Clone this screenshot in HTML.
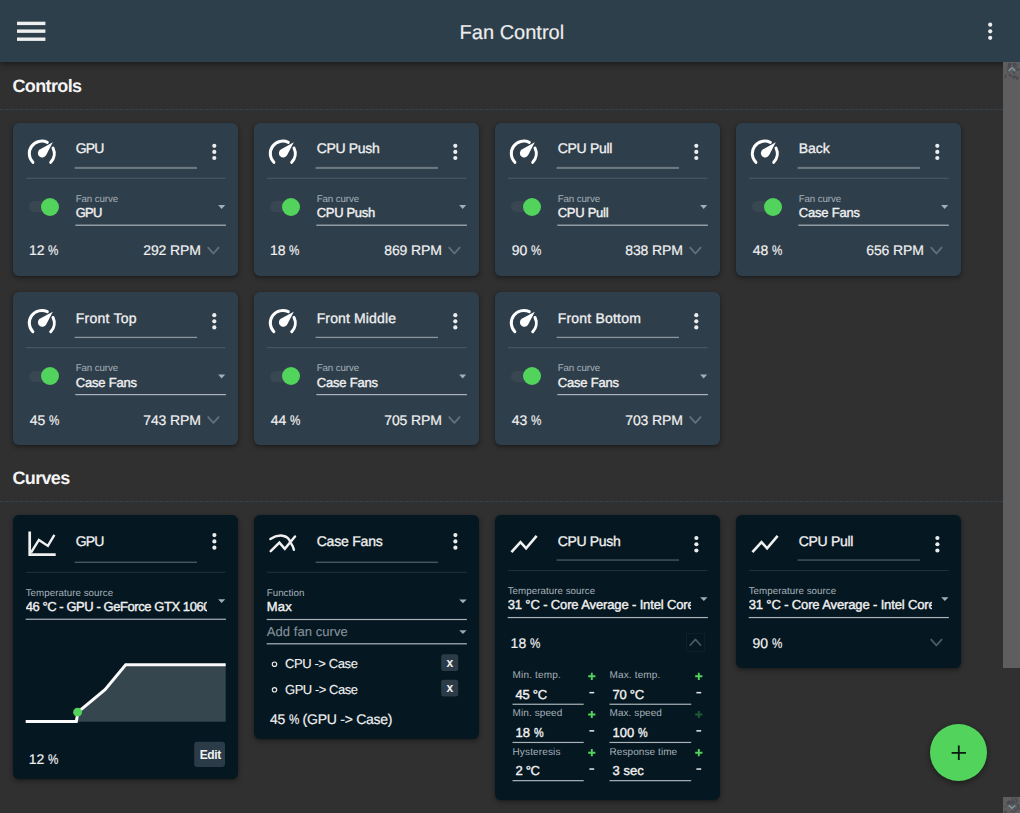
<!DOCTYPE html>
<html lang="en"><head><meta charset="utf-8"><title>Fan Control</title>
<style>
html,body{margin:0;padding:0}
body{width:1020px;height:813px;overflow:hidden;position:relative;background:#303030;font-family:"Liberation Sans",Arial,sans-serif;}
svg.g{position:absolute;left:0;top:0;overflow:visible}
.t,.c{position:absolute;white-space:pre;line-height:1;margin:0;padding:0;border:0;background:none;font-family:inherit;font-weight:400;text-align:left}
.c{overflow:hidden}
body{text-rendering:geometricPrecision}
.p{display:inline-block;width:.735em;transform:scaleX(.83);transform-origin:0 50%;letter-spacing:0}
</style></head><body>
<header>
<div style="position:absolute;left:0.00px;top:0.00px;width:1020.00px;height:62.00px;background:#2e3f4c;box-shadow:0 2px 4px -1px rgba(0,0,0,.22),0 4px 5px 0 rgba(0,0,0,.15),0 1px 8px 0 rgba(0,0,0,.13);z-index:5;"></div>
<svg style="position:absolute;left:0;top:0;overflow:visible;z-index:6" width="1" height="1"><rect x="17" y="21.7" width="28.4" height="3.4" fill="#efefef"/><rect x="17" y="29.45" width="28.4" height="3.4" fill="#efefef"/><rect x="17" y="37.5" width="28.4" height="3.4" fill="#efefef"/></svg>
<svg style="position:absolute;left:0;top:0;overflow:visible;z-index:6" width="1" height="1"><circle cx="990.2" cy="24.7" r="2.1" fill="#ececec"/><circle cx="990.2" cy="31.3" r="2.1" fill="#ececec"/><circle cx="990.2" cy="37.8" r="2.1" fill="#ececec"/></svg>
<h1 id="t0" class="t" style="top:22.67px;font-size:20px;color:#ededed;letter-spacing:0.009px;-webkit-text-stroke:0.18px;left:459.60px;z-index:6;"><span>Fan Control</span></h1>
</header>
<div class="scrollbar" aria-hidden="true">
<div style="position:absolute;left:1003.00px;top:62.00px;width:17.00px;height:605.70px;background:#5e5e5e;z-index:7;"></div>
<div style="position:absolute;left:1003.00px;top:797.00px;width:17.00px;height:16.00px;background:#5e5e5e;z-index:7;"></div>
<svg style="position:absolute;left:0;top:0;overflow:visible;z-index:8" width="1" height="1"><rect x="1007.3" y="70.7" width="1.8" height="2.0" fill="#4a4a54"/><rect x="1012.8" y="63.5" width="1.0" height="2.3" fill="#4a4a54"/><rect x="1007.6" y="66.0" width="3.2" height="1.8" fill="#4a4a54"/><rect x="1015.7" y="69.6" width="2.4" height="1.2" fill="#4a4a54"/><rect x="1012.9" y="75.5" width="2.2" height="2.2" fill="#4a4a54"/><rect x="1013.4" y="63.5" width="2.7" height="1.9" fill="#4a4a54"/><rect x="1008.2" y="63.0" width="2.9" height="1.8" fill="#4a4a54"/><rect x="1014.1" y="75.7" width="2.6" height="2.5" fill="#4a4a54"/><rect x="1009.5" y="74.5" width="2.0" height="2.5" fill="#4a4a54"/><rect x="1016.3" y="64.0" width="1.3" height="1.3" fill="#4a4a54"/><rect x="1017.5" y="69.0" width="2.4" height="1.5" fill="#4a4a54"/><rect x="1011.1" y="68.3" width="1.8" height="1.9" fill="#4a4a54"/><rect x="1012.2" y="76.1" width="2.5" height="2.5" fill="#4a4a54"/><rect x="1016.0" y="77.4" width="2.5" height="1.3" fill="#4a4a54"/><rect x="1016.0" y="77.0" width="3.0" height="1.9" fill="#4a4a54"/><rect x="1014.0" y="65.7" width="2.8" height="1.9" fill="#4a4a54"/><rect x="1008.0" y="63.5" width="2.9" height="2.6" fill="#4a4a54"/><rect x="1005.2" y="74.5" width="1.9" height="1.2" fill="#4a4a54"/><rect x="1008.1" y="74.0" width="2.9" height="1.1" fill="#4a4a54"/><rect x="1012.6" y="63.2" width="2.6" height="1.5" fill="#4a4a54"/><rect x="1016.3" y="77.2" width="2.1" height="2.6" fill="#4a4a54"/><rect x="1008.3" y="63.7" width="2.3" height="1.1" fill="#4a4a54"/><rect x="1006.8" y="68.6" width="2.3" height="1.2" fill="#4a4a54"/><rect x="1004.6" y="75.5" width="1.7" height="2.5" fill="#4a4a54"/><rect x="1016.6" y="68.2" width="2.0" height="1.8" fill="#4a4a54"/><rect x="1013.0" y="71.4" width="2.2" height="2.0" fill="#4a4a54"/><rect x="1017.2" y="804.6" width="1.9" height="2.2" fill="#4a4a54"/><rect x="1007.3" y="801.7" width="3.2" height="1.8" fill="#4a4a54"/><rect x="1011.7" y="797.7" width="1.9" height="1.9" fill="#4a4a54"/><rect x="1004.3" y="806.1" width="2.4" height="1.1" fill="#4a4a54"/><rect x="1012.8" y="804.0" width="2.5" height="1.6" fill="#4a4a54"/><rect x="1013.9" y="807.8" width="1.0" height="1.1" fill="#4a4a54"/><rect x="1013.5" y="811.0" width="1.6" height="1.7" fill="#4a4a54"/><rect x="1012.3" y="802.0" width="1.8" height="1.5" fill="#4a4a54"/><rect x="1009.2" y="805.8" width="1.7" height="1.6" fill="#4a4a54"/><rect x="1014.8" y="797.9" width="2.3" height="2.2" fill="#4a4a54"/><rect x="1008.3" y="800.6" width="2.8" height="1.4" fill="#4a4a54"/><rect x="1006.6" y="803.6" width="2.5" height="1.2" fill="#4a4a54"/><rect x="1008.5" y="802.2" width="2.8" height="1.7" fill="#4a4a54"/><rect x="1016.0" y="799.9" width="1.7" height="2.0" fill="#4a4a54"/><rect x="1016.4" y="803.8" width="1.5" height="1.2" fill="#4a4a54"/><rect x="1011.4" y="800.2" width="2.8" height="2.3" fill="#4a4a54"/><rect x="1006.6" y="801.4" width="2.8" height="2.0" fill="#4a4a54"/><rect x="1015.3" y="802.3" width="1.3" height="1.5" fill="#4a4a54"/><rect x="1015.1" y="801.3" width="1.8" height="1.7" fill="#4a4a54"/><rect x="1009.9" y="803.2" width="3.0" height="1.2" fill="#4a4a54"/><rect x="1004.1" y="810.7" width="2.9" height="2.6" fill="#4a4a54"/><rect x="1010.1" y="810.8" width="3.0" height="1.4" fill="#4a4a54"/><rect x="1014.4" y="809.2" width="2.5" height="1.8" fill="#4a4a54"/><rect x="1008.0" y="802.3" width="1.5" height="1.1" fill="#4a4a54"/><rect x="1012.2" y="801.5" width="2.8" height="1.1" fill="#4a4a54"/><rect x="1016.7" y="807.2" width="3.0" height="2.4" fill="#4a4a54"/><path d="M1008.6 70.9L1011.9 67.9L1015.2 70.9" fill="none" stroke="#7f9a9e" stroke-width="1.3"/><path d="M1008.6 805.3L1011.9 808.3L1015.2 805.3" fill="none" stroke="#7f9a9e" stroke-width="1.3"/></svg>
</div>
<main>
<section class="controls">
<div style="position:absolute;left:0;top:109px;width:1003px;height:1px;background:rgba(56,84,120,0.16);"></div>
<div style="position:absolute;left:0;top:109px;width:1003px;height:0;border-top:1px dashed rgba(70,98,140,0.26);"></div>
<h2 id="t1" class="t" style="top:76.96px;font-size:18px;color:#f4f4f4;font-weight:700;letter-spacing:-0.625px;left:12.50px;"><span>Controls</span></h2>
<article class="control-card">
<div style="position:absolute;left:13.20px;top:122.50px;width:225.00px;height:153.00px;background:#2e3e4b;border-radius:6px;box-shadow:0 2px 5px 1px rgba(0,0,0,.24),0 1px 2px rgba(0,0,0,.2);"></div>
<svg class="g" width="1" height="1"><path d="M32.88 162.31A12.5 12.5 0 0 1 47.28 142.32" fill="none" stroke="#fff" stroke-width="3.0" stroke-linecap="round"/><path d="M53.03 148.07A12.5 12.5 0 0 1 50.72 162.31" fill="none" stroke="#fff" stroke-width="3.0" stroke-linecap="round"/><path d="M52.80 142.35L46.21 155.07A4.4 4.4 0 1 1 40.20 149.18Z" fill="#fff"/><rect x="74.60" y="166.85" width="122.40" height="2.10" fill="#6d7981"/><rect x="26.00" y="177.70" width="199.50" height="1.10" fill="#4b5a65"/><circle cx="214.30" cy="145.80" r="2.1" fill="#ececec"/><circle cx="214.30" cy="151.90" r="2.1" fill="#ececec"/><circle cx="214.30" cy="158.00" r="2.1" fill="#ececec"/></svg>
<div style="position:absolute;left:29.10px;top:201.30px;width:28.00px;height:11.00px;background:#384751;border-radius:6px;"></div>
<div style="position:absolute;left:41.20px;top:197.80px;width:18.00px;height:18.00px;background:#51d35c;border-radius:50%;"></div>
<svg class="g" width="1" height="1"><rect x="75.30" y="224.60" width="150.60" height="1.20" fill="#aab2b8"/><path d="M218.10 205.10H225.20L221.65 209.10Z" fill="#a4aeb5"/><path d="M208.20 247.70L213.40 253.50L218.60 247.70" fill="none" stroke="#62707b" stroke-width="1.85" stroke-linecap="round" stroke-linejoin="round"/></svg>
<h3 id="t2" class="t" style="top:141.25px;font-size:14px;color:#f1f1f1;letter-spacing:-0.856px;-webkit-text-stroke:0.3px;left:75.70px;"><span>GPU</span></h3>
<label id="t3" class="t" style="top:194.75px;font-size:9.75px;color:#a6b1b9;letter-spacing:-0.118px;left:75.70px;"><span>Fan curve</span></label>
<div id="t4" class="t" style="top:206.40px;font-size:13px;color:#f1f1f1;letter-spacing:-0.793px;-webkit-text-stroke:0.38px;left:75.70px;"><span>GPU</span></div>
<div id="t5" class="t" style="top:243.45px;font-size:14px;color:#f1f1f1;letter-spacing:0.011px;-webkit-text-stroke:0.18px;left:28.90px;"><span>12 <span class="p">%</span></span></div>
<div id="t6" class="t" style="top:243.45px;font-size:14px;color:#f1f1f1;letter-spacing:-0.136px;-webkit-text-stroke:0.18px;right:819.34px;"><span>292 RPM</span></div>
</article>
<article class="control-card">
<div style="position:absolute;left:254.20px;top:122.50px;width:225.00px;height:153.00px;background:#2e3e4b;border-radius:6px;box-shadow:0 2px 5px 1px rgba(0,0,0,.24),0 1px 2px rgba(0,0,0,.2);"></div>
<svg class="g" width="1" height="1"><path d="M273.88 162.31A12.5 12.5 0 0 1 288.28 142.32" fill="none" stroke="#fff" stroke-width="3.0" stroke-linecap="round"/><path d="M294.03 148.07A12.5 12.5 0 0 1 291.72 162.31" fill="none" stroke="#fff" stroke-width="3.0" stroke-linecap="round"/><path d="M293.80 142.35L287.21 155.07A4.4 4.4 0 1 1 281.20 149.18Z" fill="#fff"/><rect x="315.60" y="166.85" width="122.40" height="2.10" fill="#6d7981"/><rect x="267.00" y="177.70" width="199.50" height="1.10" fill="#4b5a65"/><circle cx="455.30" cy="145.80" r="2.1" fill="#ececec"/><circle cx="455.30" cy="151.90" r="2.1" fill="#ececec"/><circle cx="455.30" cy="158.00" r="2.1" fill="#ececec"/></svg>
<div style="position:absolute;left:270.10px;top:201.30px;width:28.00px;height:11.00px;background:#384751;border-radius:6px;"></div>
<div style="position:absolute;left:282.20px;top:197.80px;width:18.00px;height:18.00px;background:#51d35c;border-radius:50%;"></div>
<svg class="g" width="1" height="1"><rect x="316.30" y="224.60" width="150.60" height="1.20" fill="#aab2b8"/><path d="M459.10 205.10H466.20L462.65 209.10Z" fill="#a4aeb5"/><path d="M449.20 247.70L454.40 253.50L459.60 247.70" fill="none" stroke="#62707b" stroke-width="1.85" stroke-linecap="round" stroke-linejoin="round"/></svg>
<h3 id="t7" class="t" style="top:141.25px;font-size:14px;color:#f1f1f1;letter-spacing:-0.331px;-webkit-text-stroke:0.3px;left:316.70px;"><span>CPU Push</span></h3>
<label id="t8" class="t" style="top:194.75px;font-size:9.75px;color:#a6b1b9;letter-spacing:-0.118px;left:316.70px;"><span>Fan curve</span></label>
<div id="t9" class="t" style="top:206.40px;font-size:13px;color:#f1f1f1;letter-spacing:-0.309px;-webkit-text-stroke:0.38px;left:316.70px;"><span>CPU Push</span></div>
<div id="t10" class="t" style="top:243.45px;font-size:14px;color:#f1f1f1;letter-spacing:0.011px;-webkit-text-stroke:0.18px;left:269.90px;"><span>18 <span class="p">%</span></span></div>
<div id="t11" class="t" style="top:243.45px;font-size:14px;color:#f1f1f1;letter-spacing:-0.136px;-webkit-text-stroke:0.18px;right:578.34px;"><span>869 RPM</span></div>
</article>
<article class="control-card">
<div style="position:absolute;left:495.20px;top:122.50px;width:225.00px;height:153.00px;background:#2e3e4b;border-radius:6px;box-shadow:0 2px 5px 1px rgba(0,0,0,.24),0 1px 2px rgba(0,0,0,.2);"></div>
<svg class="g" width="1" height="1"><path d="M514.88 162.31A12.5 12.5 0 0 1 529.28 142.32" fill="none" stroke="#fff" stroke-width="3.0" stroke-linecap="round"/><path d="M535.03 148.07A12.5 12.5 0 0 1 532.72 162.31" fill="none" stroke="#fff" stroke-width="3.0" stroke-linecap="round"/><path d="M534.80 142.35L528.21 155.07A4.4 4.4 0 1 1 522.20 149.18Z" fill="#fff"/><rect x="556.60" y="166.85" width="122.40" height="2.10" fill="#6d7981"/><rect x="508.00" y="177.70" width="199.50" height="1.10" fill="#4b5a65"/><circle cx="696.30" cy="145.80" r="2.1" fill="#ececec"/><circle cx="696.30" cy="151.90" r="2.1" fill="#ececec"/><circle cx="696.30" cy="158.00" r="2.1" fill="#ececec"/></svg>
<div style="position:absolute;left:511.10px;top:201.30px;width:28.00px;height:11.00px;background:#384751;border-radius:6px;"></div>
<div style="position:absolute;left:523.20px;top:197.80px;width:18.00px;height:18.00px;background:#51d35c;border-radius:50%;"></div>
<svg class="g" width="1" height="1"><rect x="557.30" y="224.60" width="150.60" height="1.20" fill="#aab2b8"/><path d="M700.10 205.10H707.20L703.65 209.10Z" fill="#a4aeb5"/><path d="M690.20 247.70L695.40 253.50L700.60 247.70" fill="none" stroke="#62707b" stroke-width="1.85" stroke-linecap="round" stroke-linejoin="round"/></svg>
<h3 id="t12" class="t" style="top:141.25px;font-size:14px;color:#f1f1f1;letter-spacing:-0.290px;-webkit-text-stroke:0.3px;left:557.70px;"><span>CPU Pull</span></h3>
<label id="t13" class="t" style="top:194.75px;font-size:9.75px;color:#a6b1b9;letter-spacing:-0.118px;left:557.70px;"><span>Fan curve</span></label>
<div id="t14" class="t" style="top:206.40px;font-size:13px;color:#f1f1f1;letter-spacing:-0.270px;-webkit-text-stroke:0.38px;left:557.70px;"><span>CPU Pull</span></div>
<div id="t15" class="t" style="top:243.45px;font-size:14px;color:#f1f1f1;letter-spacing:0.011px;-webkit-text-stroke:0.18px;left:511.70px;"><span>90 <span class="p">%</span></span></div>
<div id="t16" class="t" style="top:243.45px;font-size:14px;color:#f1f1f1;letter-spacing:-0.136px;-webkit-text-stroke:0.18px;right:337.34px;"><span>838 RPM</span></div>
</article>
<article class="control-card">
<div style="position:absolute;left:736.20px;top:122.50px;width:225.00px;height:153.00px;background:#2e3e4b;border-radius:6px;box-shadow:0 2px 5px 1px rgba(0,0,0,.24),0 1px 2px rgba(0,0,0,.2);"></div>
<svg class="g" width="1" height="1"><path d="M755.88 162.31A12.5 12.5 0 0 1 770.28 142.32" fill="none" stroke="#fff" stroke-width="3.0" stroke-linecap="round"/><path d="M776.03 148.07A12.5 12.5 0 0 1 773.72 162.31" fill="none" stroke="#fff" stroke-width="3.0" stroke-linecap="round"/><path d="M775.80 142.35L769.21 155.07A4.4 4.4 0 1 1 763.20 149.18Z" fill="#fff"/><rect x="797.60" y="166.85" width="122.40" height="2.10" fill="#6d7981"/><rect x="749.00" y="177.70" width="199.50" height="1.10" fill="#4b5a65"/><circle cx="937.30" cy="145.80" r="2.1" fill="#ececec"/><circle cx="937.30" cy="151.90" r="2.1" fill="#ececec"/><circle cx="937.30" cy="158.00" r="2.1" fill="#ececec"/></svg>
<div style="position:absolute;left:752.10px;top:201.30px;width:28.00px;height:11.00px;background:#384751;border-radius:6px;"></div>
<div style="position:absolute;left:764.20px;top:197.80px;width:18.00px;height:18.00px;background:#51d35c;border-radius:50%;"></div>
<svg class="g" width="1" height="1"><rect x="798.30" y="224.60" width="150.60" height="1.20" fill="#aab2b8"/><path d="M941.10 205.10H948.20L944.65 209.10Z" fill="#a4aeb5"/><path d="M931.20 247.70L936.40 253.50L941.60 247.70" fill="none" stroke="#62707b" stroke-width="1.85" stroke-linecap="round" stroke-linejoin="round"/></svg>
<h3 id="t17" class="t" style="top:141.25px;font-size:14px;color:#f1f1f1;-webkit-text-stroke:0.3px;left:798.70px;"><span>Back</span></h3>
<label id="t18" class="t" style="top:194.75px;font-size:9.75px;color:#a6b1b9;letter-spacing:-0.118px;left:798.70px;"><span>Fan curve</span></label>
<div id="t19" class="t" style="top:206.40px;font-size:13px;color:#f1f1f1;letter-spacing:-0.186px;-webkit-text-stroke:0.38px;left:798.70px;"><span>Case Fans</span></div>
<div id="t20" class="t" style="top:243.45px;font-size:14px;color:#f1f1f1;letter-spacing:0.011px;-webkit-text-stroke:0.18px;left:752.70px;"><span>48 <span class="p">%</span></span></div>
<div id="t21" class="t" style="top:243.45px;font-size:14px;color:#f1f1f1;letter-spacing:-0.136px;-webkit-text-stroke:0.18px;right:96.34px;"><span>656 RPM</span></div>
</article>
<article class="control-card">
<div style="position:absolute;left:13.20px;top:291.90px;width:225.00px;height:153.00px;background:#2e3e4b;border-radius:6px;box-shadow:0 2px 5px 1px rgba(0,0,0,.24),0 1px 2px rgba(0,0,0,.2);"></div>
<svg class="g" width="1" height="1"><path d="M32.88 331.71A12.5 12.5 0 0 1 47.28 311.72" fill="none" stroke="#fff" stroke-width="3.0" stroke-linecap="round"/><path d="M53.03 317.47A12.5 12.5 0 0 1 50.72 331.71" fill="none" stroke="#fff" stroke-width="3.0" stroke-linecap="round"/><path d="M52.80 311.75L46.21 324.47A4.4 4.4 0 1 1 40.20 318.58Z" fill="#fff"/><rect x="74.60" y="336.75" width="122.40" height="1.30" fill="#8a959c"/><rect x="26.00" y="347.10" width="199.50" height="1.10" fill="#4b5a65"/><circle cx="214.30" cy="315.20" r="2.1" fill="#ececec"/><circle cx="214.30" cy="321.30" r="2.1" fill="#ececec"/><circle cx="214.30" cy="327.40" r="2.1" fill="#ececec"/></svg>
<div style="position:absolute;left:29.10px;top:370.70px;width:28.00px;height:11.00px;background:#384751;border-radius:6px;"></div>
<div style="position:absolute;left:41.20px;top:367.20px;width:18.00px;height:18.00px;background:#51d35c;border-radius:50%;"></div>
<svg class="g" width="1" height="1"><rect x="75.30" y="394.00" width="150.60" height="1.20" fill="#aab2b8"/><path d="M218.10 374.50H225.20L221.65 378.50Z" fill="#a4aeb5"/><path d="M208.20 417.10L213.40 422.90L218.60 417.10" fill="none" stroke="#62707b" stroke-width="1.85" stroke-linecap="round" stroke-linejoin="round"/></svg>
<h3 id="t22" class="t" style="top:310.65px;font-size:14px;color:#f1f1f1;letter-spacing:0.250px;-webkit-text-stroke:0.3px;left:75.70px;"><span>Front Top</span></h3>
<label id="t23" class="t" style="top:364.15px;font-size:9.75px;color:#a6b1b9;letter-spacing:-0.118px;left:75.70px;"><span>Fan curve</span></label>
<div id="t24" class="t" style="top:375.80px;font-size:13px;color:#f1f1f1;letter-spacing:-0.186px;-webkit-text-stroke:0.38px;left:75.70px;"><span>Case Fans</span></div>
<div id="t25" class="t" style="top:412.85px;font-size:14px;color:#f1f1f1;letter-spacing:0.011px;-webkit-text-stroke:0.18px;left:29.70px;"><span>45 <span class="p">%</span></span></div>
<div id="t26" class="t" style="top:412.85px;font-size:14px;color:#f1f1f1;letter-spacing:-0.136px;-webkit-text-stroke:0.18px;right:819.34px;"><span>743 RPM</span></div>
</article>
<article class="control-card">
<div style="position:absolute;left:254.20px;top:291.90px;width:225.00px;height:153.00px;background:#2e3e4b;border-radius:6px;box-shadow:0 2px 5px 1px rgba(0,0,0,.24),0 1px 2px rgba(0,0,0,.2);"></div>
<svg class="g" width="1" height="1"><path d="M273.88 331.71A12.5 12.5 0 0 1 288.28 311.72" fill="none" stroke="#fff" stroke-width="3.0" stroke-linecap="round"/><path d="M294.03 317.47A12.5 12.5 0 0 1 291.72 331.71" fill="none" stroke="#fff" stroke-width="3.0" stroke-linecap="round"/><path d="M293.80 311.75L287.21 324.47A4.4 4.4 0 1 1 281.20 318.58Z" fill="#fff"/><rect x="315.60" y="336.75" width="122.40" height="1.30" fill="#8a959c"/><rect x="267.00" y="347.10" width="199.50" height="1.10" fill="#4b5a65"/><circle cx="455.30" cy="315.20" r="2.1" fill="#ececec"/><circle cx="455.30" cy="321.30" r="2.1" fill="#ececec"/><circle cx="455.30" cy="327.40" r="2.1" fill="#ececec"/></svg>
<div style="position:absolute;left:270.10px;top:370.70px;width:28.00px;height:11.00px;background:#384751;border-radius:6px;"></div>
<div style="position:absolute;left:282.20px;top:367.20px;width:18.00px;height:18.00px;background:#51d35c;border-radius:50%;"></div>
<svg class="g" width="1" height="1"><rect x="316.30" y="394.00" width="150.60" height="1.20" fill="#aab2b8"/><path d="M459.10 374.50H466.20L462.65 378.50Z" fill="#a4aeb5"/><path d="M449.20 417.10L454.40 422.90L459.60 417.10" fill="none" stroke="#62707b" stroke-width="1.85" stroke-linecap="round" stroke-linejoin="round"/></svg>
<h3 id="t27" class="t" style="top:310.65px;font-size:14px;color:#f1f1f1;letter-spacing:0.132px;-webkit-text-stroke:0.3px;left:316.70px;"><span>Front Middle</span></h3>
<label id="t28" class="t" style="top:364.15px;font-size:9.75px;color:#a6b1b9;letter-spacing:-0.118px;left:316.70px;"><span>Fan curve</span></label>
<div id="t29" class="t" style="top:375.80px;font-size:13px;color:#f1f1f1;letter-spacing:-0.186px;-webkit-text-stroke:0.38px;left:316.70px;"><span>Case Fans</span></div>
<div id="t30" class="t" style="top:412.85px;font-size:14px;color:#f1f1f1;letter-spacing:0.011px;-webkit-text-stroke:0.18px;left:270.70px;"><span>44 <span class="p">%</span></span></div>
<div id="t31" class="t" style="top:412.85px;font-size:14px;color:#f1f1f1;letter-spacing:-0.136px;-webkit-text-stroke:0.18px;right:578.34px;"><span>705 RPM</span></div>
</article>
<article class="control-card">
<div style="position:absolute;left:495.20px;top:291.90px;width:225.00px;height:153.00px;background:#2e3e4b;border-radius:6px;box-shadow:0 2px 5px 1px rgba(0,0,0,.24),0 1px 2px rgba(0,0,0,.2);"></div>
<svg class="g" width="1" height="1"><path d="M514.88 331.71A12.5 12.5 0 0 1 529.28 311.72" fill="none" stroke="#fff" stroke-width="3.0" stroke-linecap="round"/><path d="M535.03 317.47A12.5 12.5 0 0 1 532.72 331.71" fill="none" stroke="#fff" stroke-width="3.0" stroke-linecap="round"/><path d="M534.80 311.75L528.21 324.47A4.4 4.4 0 1 1 522.20 318.58Z" fill="#fff"/><rect x="556.60" y="336.75" width="122.40" height="1.30" fill="#8a959c"/><rect x="508.00" y="347.10" width="199.50" height="1.10" fill="#4b5a65"/><circle cx="696.30" cy="315.20" r="2.1" fill="#ececec"/><circle cx="696.30" cy="321.30" r="2.1" fill="#ececec"/><circle cx="696.30" cy="327.40" r="2.1" fill="#ececec"/></svg>
<div style="position:absolute;left:511.10px;top:370.70px;width:28.00px;height:11.00px;background:#384751;border-radius:6px;"></div>
<div style="position:absolute;left:523.20px;top:367.20px;width:18.00px;height:18.00px;background:#51d35c;border-radius:50%;"></div>
<svg class="g" width="1" height="1"><rect x="557.30" y="394.00" width="150.60" height="1.20" fill="#aab2b8"/><path d="M700.10 374.50H707.20L703.65 378.50Z" fill="#a4aeb5"/><path d="M690.20 417.10L695.40 422.90L700.60 417.10" fill="none" stroke="#62707b" stroke-width="1.85" stroke-linecap="round" stroke-linejoin="round"/></svg>
<h3 id="t32" class="t" style="top:310.65px;font-size:14px;color:#f1f1f1;letter-spacing:0.199px;-webkit-text-stroke:0.3px;left:557.70px;"><span>Front Bottom</span></h3>
<label id="t33" class="t" style="top:364.15px;font-size:9.75px;color:#a6b1b9;letter-spacing:-0.118px;left:557.70px;"><span>Fan curve</span></label>
<div id="t34" class="t" style="top:375.80px;font-size:13px;color:#f1f1f1;letter-spacing:-0.186px;-webkit-text-stroke:0.38px;left:557.70px;"><span>Case Fans</span></div>
<div id="t35" class="t" style="top:412.85px;font-size:14px;color:#f1f1f1;letter-spacing:0.011px;-webkit-text-stroke:0.18px;left:511.70px;"><span>43 <span class="p">%</span></span></div>
<div id="t36" class="t" style="top:412.85px;font-size:14px;color:#f1f1f1;letter-spacing:-0.136px;-webkit-text-stroke:0.18px;right:337.34px;"><span>703 RPM</span></div>
</article>
</section>
<section class="curves">
<div style="position:absolute;left:0;top:501px;width:1003px;height:1px;background:rgba(56,84,120,0.16);"></div>
<div style="position:absolute;left:0;top:501px;width:1003px;height:0;border-top:1px dashed rgba(70,98,140,0.26);"></div>
<h2 id="t37" class="t" style="top:469.36px;font-size:18px;color:#f4f4f4;font-weight:700;letter-spacing:-0.672px;left:12.50px;"><span>Curves</span></h2>
<article class="curve-card graph">
<div style="position:absolute;left:13.20px;top:515.00px;width:225.00px;height:264.20px;background:#051721;border-radius:6px;box-shadow:0 2px 5px 1px rgba(0,0,0,.24),0 1px 2px rgba(0,0,0,.2);"></div>
<svg class="g" width="1" height="1"><rect x="74.60" y="561.65" width="122.40" height="1.20" fill="#52616b"/><rect x="26.00" y="571.80" width="199.50" height="1.00" fill="#24343f"/><circle cx="214.40" cy="535.10" r="2.1" fill="#ececec"/><circle cx="214.40" cy="541.40" r="2.1" fill="#ececec"/><circle cx="214.40" cy="547.70" r="2.1" fill="#ececec"/><g fill="none" stroke="#f0f0f0" stroke-width="2.7"><path d="M29.7 531.6V554.7H55.7" stroke-linejoin="miter"/><path d="M31.0 552.6L38.9 539.9L47.9 545.9L54.4 534.8" stroke-width="2.4"/></g><rect x="25.70" y="618.65" width="200.20" height="1.20" fill="#aab2b8"/><path d="M218.10 599.20H225.20L221.65 603.00Z" fill="#a4aeb5"/><path d="M76.3 721.8L78 712L105 689.6L125.7 664.7H225.7V721.8Z" fill="#35464f"/><path d="M25.7 721.4H76.3L78 712L105 689.6L125.7 664.7H225.7" fill="none" stroke="#fbfbfb" stroke-width="3" stroke-linejoin="miter"/><circle cx="77.6" cy="712.2" r="4.4" fill="#51d35c"/><rect x="194.2" y="741.7" width="30.8" height="25.3" rx="3" fill="#2b3b48"/></svg>
<h3 id="t38" class="t" style="top:533.65px;font-size:14px;color:#f1f1f1;letter-spacing:-0.856px;-webkit-text-stroke:0.3px;left:75.70px;"><span>GPU</span></h3>
<label id="t39" class="t" style="top:588.75px;font-size:9.75px;color:#a6b1b9;letter-spacing:0.043px;left:25.70px;"><span>Temperature source</span></label>
<div id="t40" class="c" style="top:600.20px;font-size:13px;color:#f1f1f1;letter-spacing:-0.434px;-webkit-text-stroke:0.38px;left:25.70px;width:181.30px;height:15.6px;"><span>46 °C - GPU - GeForce GTX 1060</span></div>
<div id="t41" class="t" style="top:751.95px;font-size:14px;color:#f1f1f1;letter-spacing:0.011px;-webkit-text-stroke:0.18px;left:28.80px;"><span>12 <span class="p">%</span></span></div>
<button id="t42" class="t" style="top:748.64px;font-size:12px;color:#f1f1f1;font-weight:700;letter-spacing:-0.343px;left:199.70px;"><span>Edit</span></button>
</article>
<article class="curve-card mix">
<div style="position:absolute;left:254.20px;top:515.00px;width:225.00px;height:223.80px;background:#051721;border-radius:6px;box-shadow:0 2px 5px 1px rgba(0,0,0,.24),0 1px 2px rgba(0,0,0,.2);"></div>
<svg class="g" width="1" height="1"><rect x="315.60" y="561.65" width="122.40" height="1.20" fill="#52616b"/><rect x="267.00" y="571.80" width="199.50" height="1.00" fill="#24343f"/><circle cx="455.40" cy="535.10" r="2.1" fill="#ececec"/><circle cx="455.40" cy="541.40" r="2.1" fill="#ececec"/><circle cx="455.40" cy="547.70" r="2.1" fill="#ececec"/><g fill="none" stroke="#f0f0f0" stroke-width="2.5" stroke-linecap="round" stroke-linejoin="miter"><path d="M270.4 539.0C278 533.8 288.2 534.2 290.6 542.6C292.4 545.2 293.5 547.6 293.9 549.7"/><path d="M270.7 551.2L279.4 542.6L284.8 548.9L295 536.5"/></g><rect x="266.70" y="618.90" width="200.20" height="1.20" fill="#aab2b8"/><path d="M459.20 599.40H466.70L462.95 603.20Z" fill="#a4aeb5"/><rect x="266.70" y="643.00" width="200.20" height="1.50" fill="#8a969e"/><path d="M459.20 630.20H466.70L462.95 634.00Z" fill="#9aa5ad"/><circle cx="274.50" cy="664.20" r="2.2" fill="none" stroke="#e8e8e8" stroke-width="1.2"/><rect x="441.20" y="654.20" width="17" height="16.8" rx="2.5" fill="#2b3b48"/><circle cx="274.50" cy="689.80" r="2.2" fill="none" stroke="#e8e8e8" stroke-width="1.2"/><rect x="441.20" y="679.80" width="17" height="16.8" rx="2.5" fill="#2b3b48"/></svg>
<h3 id="t43" class="t" style="top:533.65px;font-size:14px;color:#f1f1f1;letter-spacing:-0.200px;-webkit-text-stroke:0.3px;left:316.70px;"><span>Case Fans</span></h3>
<label id="t44" class="t" style="top:589.15px;font-size:9.75px;color:#a6b1b9;letter-spacing:0.037px;left:266.70px;"><span>Function</span></label>
<div id="t45" class="t" style="top:600.20px;font-size:13px;color:#f1f1f1;letter-spacing:0.212px;-webkit-text-stroke:0.38px;left:266.70px;"><span>Max</span></div>
<div id="t46" class="t" style="top:625.20px;font-size:13px;color:#87939c;letter-spacing:0.075px;-webkit-text-stroke:0.1px;left:266.70px;"><span>Add fan curve</span></div>
<div id="t47" class="t" style="top:657.00px;font-size:13px;color:#f1f1f1;letter-spacing:-0.405px;-webkit-text-stroke:0.12px;left:285.00px;"><span>CPU -&gt; Case</span></div>
<button id="t48" class="t" style="top:656.54px;font-size:12px;color:#f1f1f1;font-weight:700;letter-spacing:-0.401px;left:446.50px;"><span>x</span></button>
<div id="t49" class="t" style="top:682.60px;font-size:13px;color:#f1f1f1;letter-spacing:-0.470px;-webkit-text-stroke:0.12px;left:285.00px;"><span>GPU -&gt; Case</span></div>
<button id="t50" class="t" style="top:682.14px;font-size:12px;color:#f1f1f1;font-weight:700;letter-spacing:-0.401px;left:446.50px;"><span>x</span></button>
<div id="t51" class="t" style="top:712.35px;font-size:14px;color:#f1f1f1;letter-spacing:-0.256px;-webkit-text-stroke:0.18px;left:270.00px;"><span>45 <span class="p">%</span> (GPU -&gt; Case)</span></div>
</article>
<article class="curve-card linear expanded">
<div style="position:absolute;left:495.20px;top:515.00px;width:225.00px;height:284.60px;background:#051721;border-radius:6px;box-shadow:0 2px 5px 1px rgba(0,0,0,.24),0 1px 2px rgba(0,0,0,.2);"></div>
<svg class="g" width="1" height="1"><rect x="556.60" y="559.45" width="122.40" height="1.20" fill="#52616b"/><rect x="508.00" y="570.10" width="199.50" height="1.00" fill="#24343f"/><circle cx="696.40" cy="538.00" r="2.1" fill="#ececec"/><circle cx="696.40" cy="544.25" r="2.1" fill="#ececec"/><circle cx="696.40" cy="550.50" r="2.1" fill="#ececec"/><path d="M512.30 551.1L520.50 542.1L526.10 548.3L535.80 536.9" fill="none" stroke="#f0f0f0" stroke-width="2.6" stroke-linecap="square" stroke-linejoin="miter"/><rect x="507.70" y="616.95" width="200.20" height="1.20" fill="#aab2b8"/><path d="M700.20 597.20H707.50L703.85 601.00Z" fill="#a4aeb5"/></svg>
<div style="position:absolute;left:685.50px;top:632.60px;width:19.5px;height:19.5px;border:1px dotted #172630;box-sizing:border-box"></div>
<svg class="g" width="1" height="1"><path d="M690.20 645.20L695.40 639.40L700.60 645.20" fill="none" stroke="#4c5a65" stroke-width="1.6" stroke-linecap="round" stroke-linejoin="round"/><rect x="512.50" y="703.65" width="71.20" height="1.20" fill="#aab3ba"/><rect x="609.50" y="703.65" width="81.70" height="1.20" fill="#aab3ba"/><path d="M588.20 676.30H595.40M591.80 672.70V679.90" stroke="#51d35c" stroke-width="1.9" fill="none"/><rect x="589.40" y="691.90" width="4.80" height="1.50" fill="#e6e6e6"/><path d="M695.20 676.30H702.40M698.80 672.70V679.90" stroke="#51d35c" stroke-width="1.9" fill="none"/><rect x="696.40" y="691.90" width="4.80" height="1.50" fill="#e6e6e6"/><rect x="512.50" y="741.85" width="71.20" height="1.20" fill="#aab3ba"/><rect x="609.50" y="741.85" width="81.70" height="1.20" fill="#aab3ba"/><path d="M588.20 714.50H595.40M591.80 710.90V718.10" stroke="#51d35c" stroke-width="1.9" fill="none"/><rect x="589.40" y="730.10" width="4.80" height="1.50" fill="#e6e6e6"/><path d="M695.20 714.50H702.40M698.80 710.90V718.10" stroke="#1f5a33" stroke-width="1.9" fill="none"/><rect x="696.40" y="730.10" width="4.80" height="1.50" fill="#e6e6e6"/><rect x="512.50" y="780.05" width="71.20" height="1.20" fill="#aab3ba"/><rect x="609.50" y="780.05" width="81.70" height="1.20" fill="#aab3ba"/><path d="M588.20 752.70H595.40M591.80 749.10V756.30" stroke="#51d35c" stroke-width="1.9" fill="none"/><rect x="589.40" y="768.30" width="4.80" height="1.50" fill="#e6e6e6"/><path d="M695.20 752.70H702.40M698.80 749.10V756.30" stroke="#51d35c" stroke-width="1.9" fill="none"/><rect x="696.40" y="768.30" width="4.80" height="1.50" fill="#e6e6e6"/></svg>
<h3 id="t52" class="t" style="top:533.65px;font-size:14px;color:#f1f1f1;letter-spacing:-0.331px;-webkit-text-stroke:0.3px;left:557.70px;"><span>CPU Push</span></h3>
<label id="t53" class="t" style="top:587.05px;font-size:9.75px;color:#a6b1b9;letter-spacing:0.043px;left:507.70px;"><span>Temperature source</span></label>
<div id="t54" class="c" style="top:598.20px;font-size:13px;color:#f1f1f1;letter-spacing:-0.134px;-webkit-text-stroke:0.38px;left:507.70px;width:182.90px;height:15.6px;"><span>31 °C - Core Average - Intel Core i7</span></div>
<div id="t55" class="t" style="top:635.65px;font-size:14px;color:#f1f1f1;letter-spacing:0.011px;-webkit-text-stroke:0.18px;left:510.60px;"><span>18 <span class="p">%</span></span></div>
<label id="t56" class="t" style="top:671.13px;font-size:10px;color:#a6b1b9;letter-spacing:0.181px;left:512.50px;"><span>Min. temp.</span></label>
<label id="t57" class="t" style="top:671.13px;font-size:10px;color:#a6b1b9;letter-spacing:0.154px;left:609.50px;"><span>Max. temp.</span></label>
<div id="t58" class="t" style="top:687.80px;font-size:13px;color:#f1f1f1;letter-spacing:-0.233px;-webkit-text-stroke:0.38px;left:515.50px;"><span>45 °C</span></div>
<div id="t59" class="t" style="top:687.80px;font-size:13px;color:#f1f1f1;letter-spacing:-0.233px;-webkit-text-stroke:0.38px;left:612.50px;"><span>70 °C</span></div>
<label id="t60" class="t" style="top:709.33px;font-size:10px;color:#a6b1b9;letter-spacing:0.104px;left:512.50px;"><span>Min. speed</span></label>
<label id="t61" class="t" style="top:709.33px;font-size:10px;color:#a6b1b9;letter-spacing:0.077px;left:609.50px;"><span>Max. speed</span></label>
<div id="t62" class="t" style="top:726.00px;font-size:13px;color:#f1f1f1;letter-spacing:0.011px;-webkit-text-stroke:0.38px;left:515.50px;"><span>18 <span class="p">%</span></span></div>
<div id="t63" class="t" style="top:726.00px;font-size:13px;color:#f1f1f1;letter-spacing:0.039px;-webkit-text-stroke:0.38px;left:612.50px;"><span>100 <span class="p">%</span></span></div>
<label id="t64" class="t" style="top:747.53px;font-size:10px;color:#a6b1b9;letter-spacing:0.145px;left:512.50px;"><span>Hysteresis</span></label>
<label id="t65" class="t" style="top:747.53px;font-size:10px;color:#a6b1b9;letter-spacing:0.079px;left:609.50px;"><span>Response time</span></label>
<div id="t66" class="t" style="top:764.20px;font-size:13px;color:#f1f1f1;letter-spacing:-0.329px;-webkit-text-stroke:0.38px;left:515.50px;"><span>2 °C</span></div>
<div id="t67" class="t" style="top:764.20px;font-size:13px;color:#f1f1f1;letter-spacing:0.041px;-webkit-text-stroke:0.38px;left:612.50px;"><span>3 sec</span></div>
</article>
<article class="curve-card linear">
<div style="position:absolute;left:736.20px;top:515.00px;width:225.00px;height:152.60px;background:#051721;border-radius:6px;box-shadow:0 2px 5px 1px rgba(0,0,0,.24),0 1px 2px rgba(0,0,0,.2);"></div>
<svg class="g" width="1" height="1"><rect x="797.60" y="559.45" width="122.40" height="1.20" fill="#52616b"/><rect x="749.00" y="570.10" width="199.50" height="1.00" fill="#24343f"/><circle cx="937.40" cy="538.00" r="2.1" fill="#ececec"/><circle cx="937.40" cy="544.25" r="2.1" fill="#ececec"/><circle cx="937.40" cy="550.50" r="2.1" fill="#ececec"/><path d="M753.30 551.1L761.50 542.1L767.10 548.3L776.80 536.9" fill="none" stroke="#f0f0f0" stroke-width="2.6" stroke-linecap="square" stroke-linejoin="miter"/><rect x="748.70" y="616.95" width="200.20" height="1.20" fill="#aab2b8"/><path d="M941.20 597.20H948.50L944.85 601.00Z" fill="#a4aeb5"/><path d="M931.20 639.60L936.40 645.40L941.60 639.60" fill="none" stroke="#4c5a65" stroke-width="1.85" stroke-linecap="round" stroke-linejoin="round"/></svg>
<h3 id="t68" class="t" style="top:533.65px;font-size:14px;color:#f1f1f1;letter-spacing:-0.290px;-webkit-text-stroke:0.3px;left:798.70px;"><span>CPU Pull</span></h3>
<label id="t69" class="t" style="top:587.05px;font-size:9.75px;color:#a6b1b9;letter-spacing:0.043px;left:748.70px;"><span>Temperature source</span></label>
<div id="t70" class="c" style="top:598.20px;font-size:13px;color:#f1f1f1;letter-spacing:-0.134px;-webkit-text-stroke:0.38px;left:748.70px;width:182.90px;height:15.6px;"><span>31 °C - Core Average - Intel Core i7</span></div>
<div id="t71" class="t" style="top:635.65px;font-size:14px;color:#f1f1f1;letter-spacing:0.011px;-webkit-text-stroke:0.18px;left:752.40px;"><span>90 <span class="p">%</span></span></div>
</article>
</section>
</main>
<div class="fab" role="button" aria-label="Add">
<div style="position:absolute;left:930.20px;top:724.10px;width:57.00px;height:57.00px;background:#51d35c;border-radius:50%;box-shadow:0 2px 5px 1px rgba(0,0,0,0.35);"></div>
<svg class="g" width="1" height="1"><path d="M951.6 752.8H966M958.8 745.6V760" stroke="#0a1a10" stroke-width="1.8" fill="none"/></svg>
</div>
</body></html>
